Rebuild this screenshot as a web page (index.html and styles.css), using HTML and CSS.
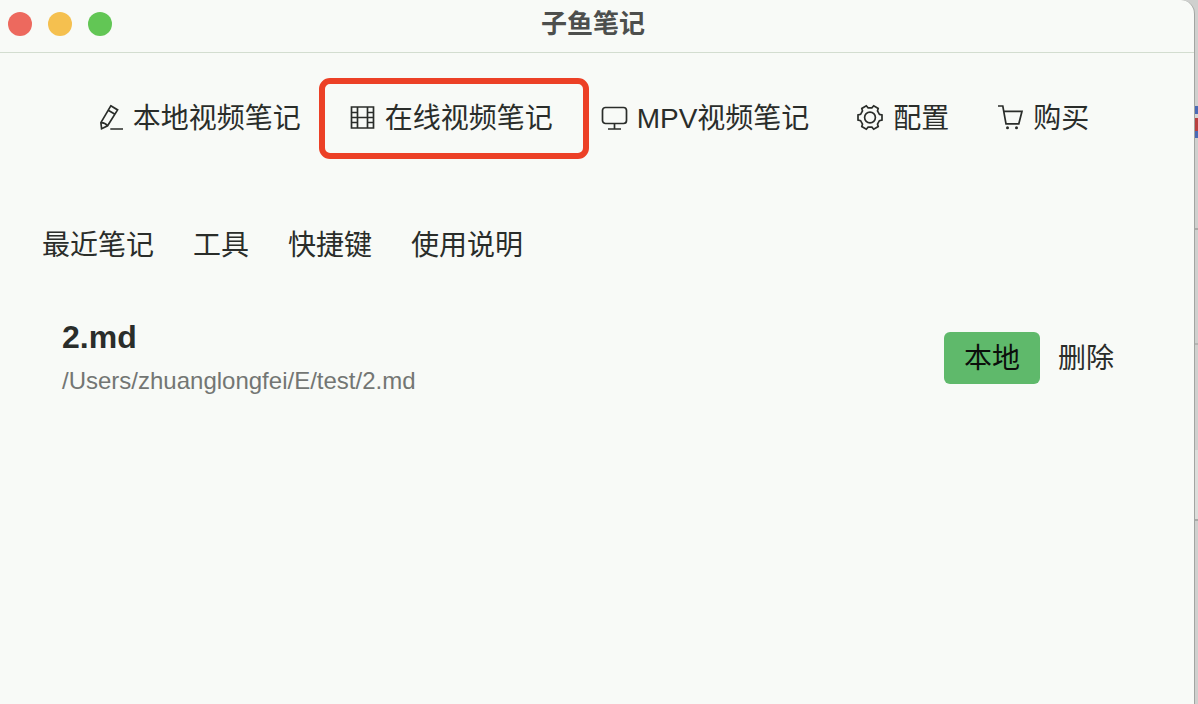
FILE: index.html
```
<!DOCTYPE html>
<html lang="zh-CN">
<head>
    <meta charset="UTF-8">
    <meta name="viewport" content="width=device-width, initial-scale=1.0">
    <title>子鱼笔记</title>
    <link rel="stylesheet" href="styles.css">
</head>
<body>
    <div class="window">
        <header class="titlebar">
            <div class="lights">
                <button class="light red" type="button" aria-label="关闭"></button>
                <button class="light yellow" type="button" aria-label="最小化"></button>
                <button class="light green" type="button" aria-label="缩放"></button>
            </div>
            <h1 class="title">子鱼笔记</h1>
        </header>

        <nav class="menu">
            <a class="menu-item" href="#local">
                <svg class="icon" viewBox="0 0 28 28">
                    <path d="M13.8 1.8 20.6 5.9 10.6 21.8 4.6 24.8 3.9 18.6z M11.2 6.2 18 10.3 M3.9 18.6Q8 18.4 10.6 21.8 M13.3 25H26"/>
                </svg>
                <span>本地视频笔记</span>
            </a>
            <a class="menu-item marked" href="#online">
                <svg class="icon" viewBox="0 0 28 28">
                    <path d="M2.5 3h22v21h-22z M8.5 3v21 M18.5 3v21 M2.5 8.5h6 M2.5 13.5h22 M2.5 18.5h6 M18.5 8.5h6 M18.5 18.5h6"/>
                </svg>
                <span>在线视频笔记</span>
            </a>
            <a class="menu-item" href="#mpv">
                <svg class="icon" viewBox="0 0 28 28">
                    <rect x="1.5" y="3.5" width="24" height="16" rx="3"/>
                    <path d="M13.5 19.5v5 M7 25h13"/>
                </svg>
                <span>MPV视频笔记</span>
            </a>
            <a class="menu-item" href="#settings">
                <svg class="icon" viewBox="0 0 28 28">
                    <path d="M22.4 10.3 25 10.9V16.1L22.4 16.7 20.5 20 21.2 22.6 16.7 25.2 14.9 23.2H11.1L9.3 25.2 4.8 22.6 5.5 20 3.6 16.7 1 16.1V10.9L3.6 10.3 5.5 7 4.8 4.4 9.3 1.8 11.1 3.8H14.9L16.7 1.8 21.2 4.4 20.5 7z"/>
                    <circle cx="13" cy="13.5" r="5.4"/>
                </svg>
                <span>配置</span>
            </a>
            <a class="menu-item" href="#buy">
                <svg class="icon" viewBox="0 0 28 28">
                    <path d="M1 2H5.8L9 19.8H21.8L25 7.3H6.8"/>
                    <circle class="dot" cx="10.5" cy="23.8" r="1.5"/>
                    <circle class="dot" cx="19.5" cy="23.8" r="1.5"/>
                </svg>
                <span>购买</span>
            </a>
        </nav>

        <nav class="tabs">
            <a href="#recent">最近笔记</a>
            <a href="#tools">工具</a>
            <a href="#shortcuts">快捷键</a>
            <a href="#help">使用说明</a>
        </nav>

        <ul class="notes">
            <li class="note">
                <div class="note-info">
                    <h2>2.md</h2>
                    <p>/Users/zhuanglongfei/E/test/2.md</p>
                </div>
                <div class="note-actions">
                    <button class="btn-local" type="button">本地</button>
                    <button class="btn-delete" type="button">删除</button>
                </div>
            </li>
        </ul>
    </div>
    <div class="desktop-edge"></div>
</body>
</html>
```
FILE: styles.css
```
* {
    box-sizing: border-box;
}
body {
    display: grid;
    grid-template-columns: 1fr 3px;
    min-height: 100vh;
    margin: 0;
    background: #cfd0ce;
    font-family: "Liberation Sans", "Noto Sans CJK SC", sans-serif;
    font-size: 28px;
    line-height: 40px;
    color: #2a2d2a;
}
a {
    color: inherit;
    text-decoration: none;
}
button {
    padding: 0;
    border: none;
    background: none;
    color: inherit;
    font: inherit;
    cursor: pointer;
}
.window {
    border-right: 1px solid #a3a5a2;
    border-top-right-radius: 14px;
    background: #f8faf7;
}

/* Title bar */
.titlebar {
    display: grid;
    grid-template-columns: 1fr auto 1fr;
    align-items: center;
    height: 53px;
    padding: 0 16px 4px 8px;
    border-bottom: 1px solid #d3ddd0;
}
.lights {
    display: flex;
    gap: 16px;
}
.light {
    width: 24px;
    height: 24px;
    border-radius: 50%;
}
.red {
    background: #ed695e;
}
.yellow {
    background: #f5c04f;
}
.green {
    background: #62c655;
}
.title {
    margin: 0;
    font-size: 26px;
    font-weight: bold;
    color: #4d4f4d;
}

/* Main menu */
.menu {
    display: flex;
    justify-content: center;
    gap: 48px;
    padding: 46px 8px 0 0;
}
.menu-item {
    position: relative;
    display: flex;
    align-items: center;
    gap: 8px;
    white-space: nowrap;
}
.marked::after {
    content: "";
    position: absolute;
    inset: -21px -36px -20px -30px;
    border: 6px solid #ec4026;
    border-radius: 11px;
}
.icon {
    width: 28px;
    height: 28px;
    margin-bottom: 2px;
    fill: none;
    stroke: #2a2d2a;
    stroke-width: 1.7;
}
.icon .dot {
    fill: #2a2d2a;
    stroke: none;
}

/* Tabs */
.tabs {
    display: flex;
    gap: 39px;
    padding: 87px 42px 0;
}

/* Recent notes */
.notes {
    margin: 0;
    padding: 49px 80px 0 62px;
    list-style: none;
}
.note {
    display: flex;
    justify-content: space-between;
    align-items: center;
}
.note-info {
    padding-top: 2px;
}
.note h2 {
    margin: 0;
    font-size: 32px;
}
.note p {
    margin: 4px 0 0;
    font-size: 24px;
    color: #737673;
}
.note-actions {
    display: flex;
    align-items: center;
    gap: 18px;
}
.btn-local,
.btn-delete {
    padding-top: 2px;
}
.btn-local {
    height: 52px;
    padding-left: 20px;
    padding-right: 20px;
    border-radius: 6px;
    background: #5fb96b;
    color: #0b0f0b;
}

/* Strip of the desktop behind the window */
.desktop-edge {
    background: linear-gradient(#cfd0ce 106px, #4a6ab5 106px, #4a6ab5 114px, #d5d6d4 114px, #d5d6d4 118px, #b8403f 118px, #b8403f 131px, #4a6ab5 131px, #4a6ab5 138px, #cfd0ce 138px, #cfd0ce 228px, #a9aaa8 228px, #a9aaa8 230px, #cfd0ce 230px, #cfd0ce 343px, #b5b6b4 343px, #b5b6b4 345px, #cfd0ce 345px, #cfd0ce 450px, #dcdedb 450px, #dcdedb 519px, #a9aaa8 519px, #a9aaa8 521px, #cfd0ce 521px);
}
```
